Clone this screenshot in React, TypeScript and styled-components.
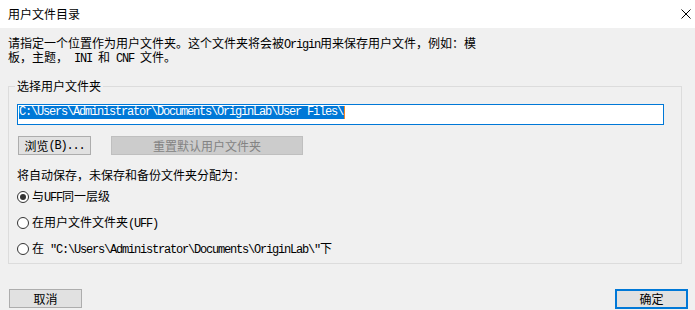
import React from 'react';
import styled, { createGlobalStyle } from 'styled-components';

const Global = createGlobalStyle`
  html, body { margin: 0; padding: 0; background: #f0f0f0; }
  body {
    font-family: "Noto Sans CJK SC", "Noto Sans", sans-serif;
    font-size: 12px;
    color: #000;
  }
  #root { width: 695px; height: 310px; }
`;

const Window = styled.div`
  width: 695px;
  height: 310px;
  display: flex;
  flex-direction: column;
  background: #f0f0f0;
  overflow: hidden;
`;

const TitleBar = styled.div`
  height: 28px;
  flex: none;
  background: #fff;
  display: flex;
  align-items: center;
  justify-content: space-between;
  padding: 0 4px 1px 8px;
  box-sizing: border-box;
`;

const Title = styled.span`
  font-size: 12px;
  line-height: 14px;
  color: #000;
`;

const CloseIcon = styled.svg`
  width: 10px;
  height: 10px;
  display: block;
`;

const Body = styled.div`
  display: flex;
  flex-direction: column;
  padding: 0 7px 0 8px;
`;

const Mono = styled.span`
  font-family: "Liberation Mono", monospace;
  font-size: 12px;
  letter-spacing: -1.2px;
`;

const Description = styled.p`
  margin: 9px 0 0 0;
  font-size: 12px;
  line-height: 12px;
  white-space: pre;
`;

const Group = styled.fieldset`
  margin: 14px 0 0 0;
  width: 674px;
  box-sizing: border-box;
  border: 1px solid #dcdcdc;
  padding: 0 17px 1px 8px;
  display: flex;
  flex-direction: column;
  min-width: 0;
`;

const Legend = styled.legend`
  padding: 0 2px;
  margin-left: -2px;
  font-size: 12px;
  line-height: 14px;
`;

const PathField = styled.div`
  margin-top: 11px;
  height: 21px;
  box-sizing: border-box;
  border: 1px solid #0078d7;
  background: #fff;
  display: flex;
  align-items: flex-start;
  padding: 1px 0 0 1px;
`;

const Selection = styled.span`
  background: #0078d7;
  color: #fff;
  height: 13px;
  line-height: 13px;
  font-family: "Liberation Mono", monospace;
  font-size: 12px;
  letter-spacing: -1.2px;
  white-space: pre;
  padding-right: 1px;
`;

const Caret = styled.span`
  width: 1px;
  height: 13px;
  background: #f5841f;
`;

const ButtonRow = styled.div`
  margin-top: 11px;
  display: flex;
  gap: 20px;
  padding-left: 1px;
`;

const Button = styled.button<{ $w: number; $default?: boolean }>`
  width: ${(p) => p.$w}px;
  height: ${(p) => (p.$default ? 20 : 19)}px;
  box-sizing: border-box;
  margin: 0;
  padding: 0;
  border: ${(p) => (p.$default ? '2px solid #0078d7' : '1px solid #adadad')};
  background: #e1e1e1;
  color: #000;
  font-family: "Noto Sans CJK SC", sans-serif;
  font-size: 12px;
  line-height: 14px;
  display: flex;
  align-items: center;
  justify-content: center;
  white-space: pre;
  &:disabled {
    background: #cccccc;
    border-color: #bfbfbf;
    color: #838383;
  }
`;

const SectionLabel = styled.div`
  margin-top: 13px;
  line-height: 14px;
  font-size: 12px;
`;

const RadioList = styled.div`
  margin-top: 2px;
  display: flex;
  flex-direction: column;
`;

const RadioRow = styled.label`
  height: 26px;
  display: flex;
  align-items: center;
  gap: 3px;
  font-size: 12px;
  line-height: 14px;
  white-space: pre;
`;

const RadioCircle = styled.span<{ $checked?: boolean }>`
  width: 12px;
  height: 12px;
  box-sizing: border-box;
  border: 1px solid #333;
  border-radius: 50%;
  background: #fff;
  display: flex;
  align-items: center;
  justify-content: center;
  flex: none;
  &::after {
    content: '';
    width: 6px;
    height: 6px;
    border-radius: 50%;
    background: #333;
    display: ${(p) => (p.$checked ? 'block' : 'none')};
  }
`;

const Footer = styled.div`
  margin-top: 25px;
  display: flex;
  justify-content: space-between;
  padding-left: 1px;
`;

const Radio: React.FC<{ checked?: boolean; children: React.ReactNode }> = ({ checked, children }) => (
  <RadioRow>
    <RadioCircle $checked={checked} />
    <span>{children}</span>
  </RadioRow>
);

export default function App() {
  return (
    <>
      <Global />
      <Window>
        <TitleBar>
          <Title>用户文件目录</Title>
          <CloseIcon viewBox="0 0 10 10">
            <path d="M0.5 0.5 L9.5 9.5 M9.5 0.5 L0.5 9.5" stroke="#000" strokeWidth="1" fill="none" />
          </CloseIcon>
        </TitleBar>
        <Body>
          <Description>
            请指定一个位置作为用户文件夹。这个文件夹将会被<Mono>Origin</Mono>用来保存用户文件，例如：模{'\n'}板，主题，<Mono> INI </Mono>和<Mono> CNF </Mono>文件。
          </Description>
          <Group>
            <Legend>选择用户文件夹</Legend>
            <PathField>
              <Selection>{'C:\\Users\\Administrator\\Documents\\OriginLab\\User Files\\'}</Selection>
              <Caret />
            </PathField>
            <ButtonRow>
              <Button $w={73}>
                浏览<Mono>(B)...</Mono>
              </Button>
              <Button $w={192} disabled>
                重置默认用户文件夹
              </Button>
            </ButtonRow>
            <SectionLabel>将自动保存，未保存和备份文件夹分配为：</SectionLabel>
            <RadioList>
              <Radio checked>
                与<Mono>UFF</Mono>同一层级
              </Radio>
              <Radio>
                在用户文件文件夹<Mono>(UFF)</Mono>
              </Radio>
              <Radio>
                在<Mono>{' "C:\\Users\\Administrator\\Documents\\OriginLab\\"'}</Mono>下
              </Radio>
            </RadioList>
          </Group>
          <Footer>
            <Button $w={73}>取消</Button>
            <Button $w={73} $default>
              确定
            </Button>
          </Footer>
        </Body>
      </Window>
    </>
  );
}
